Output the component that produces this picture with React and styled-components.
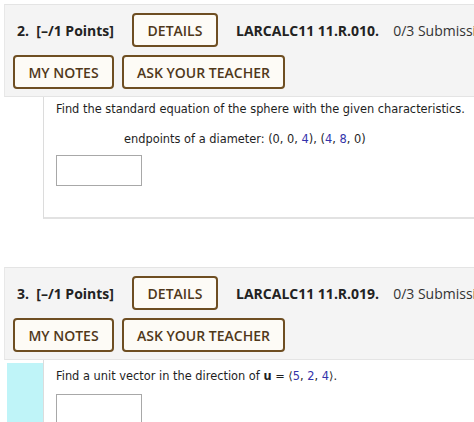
import React from 'react';
import styled, { createGlobalStyle } from 'styled-components';

const GlobalStyle = createGlobalStyle`
  html, body {
    margin: 0;
    padding: 0;
    background: #fff;
    overflow: hidden;
  }
  body {
    width: 474px;
    height: 422px;
  }
`;

const Page = styled.div`
  padding: 4px 0 0 4px;
  display: flex;
  flex-direction: column;
`;

const Question = styled.section`
  display: flex;
  flex-direction: column;
  margin-bottom: ${(p) => p.$gap || 0}px;
`;

const Header = styled.header`
  background: #f4f4f4;
  border-top: 1px solid #e4e4e4;
  border-left: 1px solid #e8e8e8;
  border-bottom: 1px solid #e4e4e4;
  padding: 8px 0 7px 8px;
  display: flex;
  flex-direction: column;
  gap: 8px;
  font-family: "Open Sans", "Liberation Sans", sans-serif;
  white-space: nowrap;
  overflow: hidden;
`;

const Row = styled.div`
  display: flex;
  align-items: center;
  gap: 8px;
`;

const Title = styled.span`
  font-weight: 700;
  font-size: 14px;
  color: #222;
  padding-left: 4px;
  width: 107px;
  flex-shrink: 0;
`;

const Label = styled.span`
  font-weight: 700;
  font-size: 14px;
  color: #222;
  margin-left: 10px;
  flex-shrink: 0;
`;

const Submissions = styled.span`
  font-size: 14px;
  color: #333;
  margin-left: 6px;
  flex-shrink: 0;
`;

const Button = styled.button`
  flex-shrink: 0;
  height: 34px;
  width: ${(p) => p.$w}px;
  box-sizing: border-box;
  border: 2px solid #6e4e22;
  border-radius: 4px;
  background: #fdfbf6;
  color: #50381a;
  font-family: "Open Sans", "Liberation Sans", sans-serif;
  font-weight: 600;
  font-size: 14px;
  padding: 0;
`;

const Body = styled.div`
  display: flex;
  padding-left: ${(p) => (p.$cyan ? 3 : 0)}px;
`;

const Gutter = styled.div`
  width: ${(p) => (p.$cyan ? 36 : 39)}px;
  background: ${(p) => (p.$cyan ? '#bff4f8' : '#fff')};
  margin-top: ${(p) => (p.$cyan ? 3 : 0)}px;
`;

const Content = styled.div`
  flex: 1;
  border-left: 1px solid #dcdcdc;
  border-bottom: ${(p) => (p.$open ? 'none' : '2px solid #e2e2e2')};
  height: ${(p) => p.$h}px;
  padding: 5px 0 0 12px;
  box-sizing: border-box;
  font-family: "DejaVu Sans", Verdana, sans-serif;
  font-size: 11.4px;
  color: #1e1e1e;
  white-space: nowrap;
`;

const Line = styled.p`
  margin: 0;
  line-height: 14px;
  padding-left: ${(p) => p.$indent || 0}px;
  margin-top: ${(p) => p.$top || 0}px;
`;

const Num = styled.span`
  color: #3333aa;
`;

const AnswerBox = styled.div`
  width: 86px;
  height: 31px;
  box-sizing: border-box;
  border: 1px solid #a8a8a8;
  margin-top: ${(p) => p.$top}px;
`;

function QuestionHeader({ num, code }) {
  return (
    <Header>
      <Row>
        <Title>{num}.&nbsp; [–/1 Points]</Title>
        <Button $w={86}>DETAILS</Button>
        <Label>{code}</Label>
        <Submissions>0/3 Submissions Used</Submissions>
      </Row>
      <Row>
        <Button $w={101}>MY NOTES</Button>
        <Button $w={163}>ASK YOUR TEACHER</Button>
      </Row>
    </Header>
  );
}

export default function App() {
  return (
    <>
      <GlobalStyle />
      <Page>
        <Question $gap={48}>
          <QuestionHeader num={2} code="LARCALC11 11.R.010." />
          <Body>
            <Gutter />
            <Content $h={122}>
              <Line>Find the standard equation of the sphere with the given characteristics.</Line>
              <Line $indent={68} $top={16}>
                endpoints of a diameter: (0, 0, <Num>4</Num>), (<Num>4</Num>, <Num>8</Num>, 0)
              </Line>
              <AnswerBox $top={9} />
            </Content>
          </Body>
        </Question>
        <Question>
          <QuestionHeader num={3} code="LARCALC11 11.R.019." />
          <Body $cyan>
            <Gutter $cyan />
            <Content $open $h={70}>
              <Line $top={4}>
                Find a unit vector in the direction of <b>u</b> = ⟨<Num>5</Num>, <Num>2</Num>, <Num>4</Num>⟩.
              </Line>
              <AnswerBox $top={11} />
            </Content>
          </Body>
        </Question>
      </Page>
    </>
  );
}
